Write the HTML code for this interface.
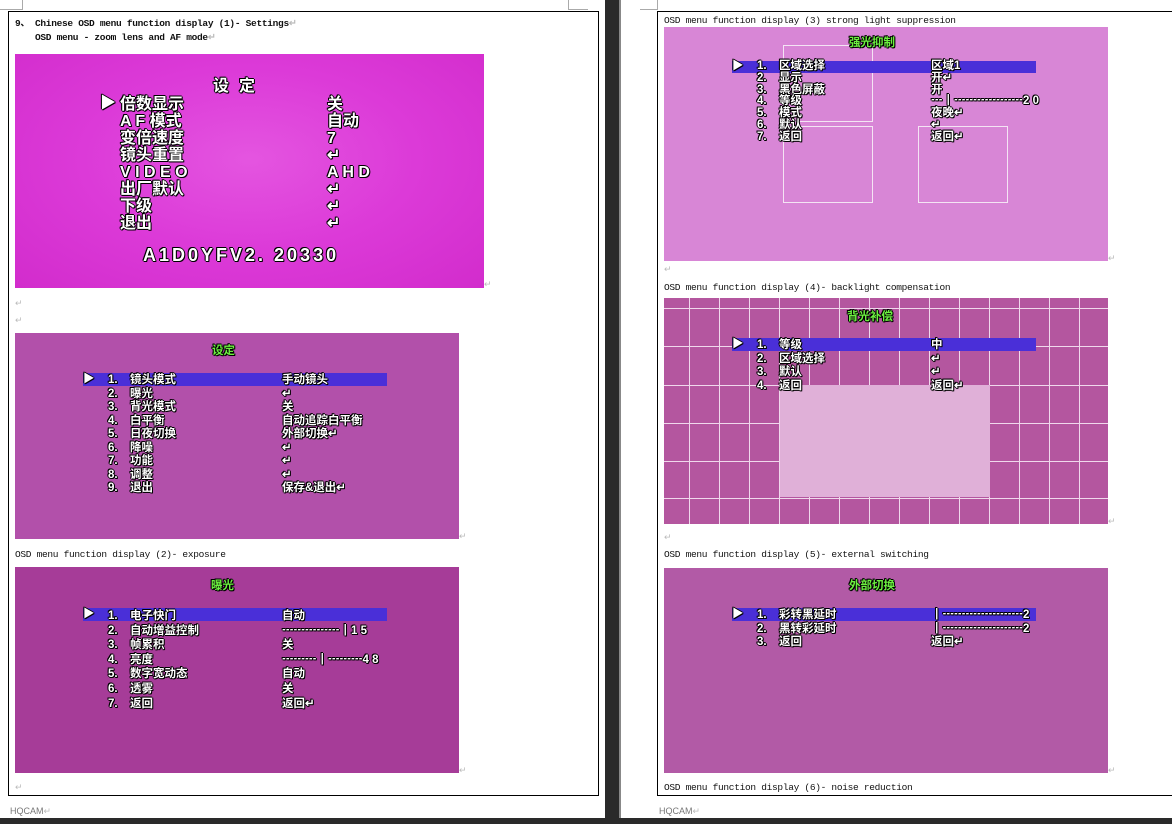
<!DOCTYPE html>
<html><head><meta charset="utf-8"><style>
*{margin:0;padding:0;box-sizing:border-box}
body{width:1172px;height:824px;background:#fff;position:relative;overflow:hidden;font-family:"Liberation Mono","Noto Sans CJK SC",monospace}
.a{position:absolute}
.cap{position:absolute;font-size:9.5px;color:#111;white-space:nowrap;font-family:"Liberation Mono","Noto Sans CJK SC",monospace;letter-spacing:-0.3px}
.img{position:absolute;overflow:hidden}
.o{position:absolute;white-space:nowrap;color:#fff;font-family:"Liberation Sans","Noto Sans CJK SC",sans-serif;font-weight:bold;
text-shadow:1px 0 0 #000,-1px 0 0 #000,0 1px 0 #000,0 -1px 0 #000,1px 1px 0 #000,-1px -1px 0 #000;line-height:1}
.s{font-size:11.5px}
.g{color:#6cf040}
.bar{position:absolute;background:#4a2fd8}
.ret{font-size:9px;color:#bbb;position:absolute}
.box{position:absolute;border:1.5px solid #f4e4f4}
</style></head><body>
<!-- left page -->
<div class="a" style="left:8px;top:11px;width:591px;height:785px;border:1px solid #000"></div>
<div class="a" style="left:22px;top:0;width:1px;height:10px;background:#aaa"></div>
<div class="a" style="left:0;top:9px;width:22px;height:1px;background:#aaa"></div>
<div class="a" style="left:568px;top:0;width:1px;height:10px;background:#aaa"></div>
<div class="a" style="left:568px;top:9px;width:20px;height:1px;background:#aaa"></div>
<div class="a" style="left:605px;top:0;width:15px;height:824px;background:#2a2a2a"></div>
<div class="a" style="left:619px;top:0;width:2px;height:824px;background:#888"></div>
<div class="a" style="left:0;top:818px;width:1172px;height:6px;background:#2a2a2a"></div>
<div class="a" style="left:657px;top:0;width:1px;height:10px;background:#aaa"></div>
<div class="a" style="left:640px;top:9px;width:17px;height:1px;background:#aaa"></div>
<!-- right page -->
<div class="a" style="left:657px;top:11px;width:520px;height:785px;border:1px solid #000"></div>

<div class="cap" style="left:15px;top:15px;font-weight:bold">9、 Chinese OSD menu function display (1)- Settings<span style="color:#bbb">↵</span></div>
<div class="cap" style="left:35px;top:32px;font-weight:bold">OSD menu - zoom lens and AF mode<span style="color:#bbb">↵</span></div>

<!-- image 1 -->
<div class="img" style="left:15px;top:54px;width:469px;height:234px;background:radial-gradient(ellipse at 50% 45%,#e455e0 0%,#dc3ad8 50%,#d22ccc 100%)">
<div class="o" style="left:198px;top:25px;font-size:16px;letter-spacing:10px">设定</div>
<div class="o" style="left:85px;top:42px;font-size:16px">▶</div>
<div class="o" style="left:105px;top:42px;font-size:16px;line-height:17px">倍数显示<br>A F 模式<br>变倍速度<br>镜头重置<br>V I D E O<br>出厂默认<br>下级<br>退出</div>
<div class="o" style="left:312px;top:42px;font-size:16px;line-height:17px">关<br>自动<br>7<br>↵<br>A H D<br>↵<br>↵<br>↵</div>
<div class="o" style="left:128px;top:192px;font-size:18px;letter-spacing:3px">A1D0YFV2. 20330</div>
</div>
<div class="ret" style="left:484px;top:280px">↵</div>
<div class="ret" style="left:15px;top:299px">↵</div>
<div class="ret" style="left:15px;top:316px">↵</div>

<!-- image 2 -->
<div class="img" style="left:15px;top:333px;width:444px;height:206px;background:#b250aa">
<div class="o s g" style="left:197px;top:13px">设定</div>
<div class="bar" style="left:68px;top:40px;width:304px;height:13px"></div>
<div class="o s" style="left:68px;top:41px">▶</div>
<div class="o s" style="left:93px;top:41px;line-height:13.5px">1.<br>2.<br>3.<br>4.<br>5.<br>6.<br>7.<br>8.<br>9.</div>
<div class="o s" style="left:115px;top:41px;line-height:13.5px">镜头模式<br>曝光<br>背光模式<br>白平衡<br>日夜切换<br>降噪<br>功能<br>调整<br>退出</div>
<div class="o s" style="left:267px;top:41px;line-height:13.5px">手动镜头<br>↵<br>关<br>自动追踪白平衡<br>外部切换↵<br>↵<br>↵<br>↵<br>保存&amp;退出↵</div>
</div>
<div class="ret" style="left:459px;top:532px">↵</div>
<div class="cap" style="left:15px;top:549px">OSD menu function display (2)- exposure</div>

<!-- image 3 -->
<div class="img" style="left:15px;top:567px;width:444px;height:206px;background:#a63c98">
<div class="o s g" style="left:196px;top:14px">曝光</div>
<div class="bar" style="left:68px;top:41px;width:304px;height:13px"></div>
<div class="o s" style="left:68px;top:42px">▶</div>
<div class="o s" style="left:93px;top:42px;line-height:14.6px">1.<br>2.<br>3.<br>4.<br>5.<br>6.<br>7.</div>
<div class="o s" style="left:115px;top:42px;line-height:14.6px">电子快门<br>自动增益控制<br>帧累积<br>亮度<br>数字宽动态<br>透雾<br>返回</div>
<div class="o s" style="left:267px;top:42px;line-height:14.6px">自动<br>┅┅┅┅┅┃1 5<br>关<br>┅┅┅┃┅┅┅4 8<br>自动<br>关<br>返回↵</div>
</div>
<div class="ret" style="left:459px;top:766px">↵</div>
<div class="ret" style="left:15px;top:783px">↵</div>
<div class="a" style="left:10px;top:806px;font-size:9px;color:#777;font-family:'Liberation Sans',sans-serif">HQCAM<span style="color:#bbb">↵</span></div>

<!-- R1 -->
<div class="cap" style="left:664px;top:15px">OSD menu function display (3) strong light suppression</div>
<div class="img" style="left:664px;top:27px;width:444px;height:234px;background:#d886d6">
<div class="box" style="left:119px;top:18px;width:90px;height:77px"></div>
<div class="box" style="left:119px;top:99px;width:90px;height:77px"></div>
<div class="box" style="left:254px;top:99px;width:90px;height:77px"></div>
<div class="o s g" style="left:185px;top:11px">强光抑制</div>
<div class="bar" style="left:68px;top:34px;width:304px;height:12px"></div>
<div class="o s" style="left:68px;top:34px">▶</div>
<div class="o s" style="left:93px;top:34px;line-height:11.8px">1.<br>2.<br>3.<br>4.<br>5.<br>6.<br>7.</div>
<div class="o s" style="left:115px;top:34px;line-height:11.8px">区域选择<br>显示<br>黑色屏蔽<br>等级<br>模式<br>默认<br>返回</div>
<div class="o s" style="left:267px;top:34px;line-height:11.8px">区域1<br>开↵<br>开<br>┅┃┅┅┅┅┅┅2 0<br>夜晚↵<br>↵<br>返回↵</div>
</div>
<div class="ret" style="left:1108px;top:254px">↵</div>
<div class="ret" style="left:664px;top:265px">↵</div>

<!-- R2 -->
<div class="cap" style="left:664px;top:282px">OSD menu function display (4)- backlight compensation</div>
<div class="img" style="left:664px;top:298px;width:444px;height:226px;background:#b4569f;
background-image:repeating-linear-gradient(90deg,transparent 0 25px,#f0d8ec 25px 26px,transparent 26px 30px),repeating-linear-gradient(0deg,transparent 0 0px);">
<div class="a" style="left:0;top:10px;width:444px;height:1px;background:#f0d8ec"></div>
<div class="a" style="left:0;top:48px;width:444px;height:1px;background:#f0d8ec"></div>
<div class="a" style="left:0;top:87px;width:444px;height:1px;background:#f0d8ec"></div>
<div class="a" style="left:0;top:125px;width:444px;height:1px;background:#f0d8ec"></div>
<div class="a" style="left:0;top:163px;width:444px;height:1px;background:#f0d8ec"></div>
<div class="a" style="left:0;top:200px;width:444px;height:1px;background:#f0d8ec"></div>
<div class="a" style="left:116px;top:87px;width:210px;height:112px;background:#e0b0d8"></div>
<div class="o s g" style="left:183px;top:14px">背光补偿</div>
<div class="bar" style="left:68px;top:40px;width:304px;height:13px"></div>
<div class="o s" style="left:68px;top:41px">▶</div>
<div class="o s" style="left:93px;top:41px;line-height:13.5px">1.<br>2.<br>3.<br>4.</div>
<div class="o s" style="left:115px;top:41px;line-height:13.5px">等级<br>区域选择<br>默认<br>返回</div>
<div class="o s" style="left:267px;top:41px;line-height:13.5px">中<br>↵<br>↵<br>返回↵</div>
</div>
<div class="ret" style="left:1108px;top:517px">↵</div>
<div class="ret" style="left:664px;top:533px">↵</div>

<!-- R3 -->
<div class="cap" style="left:664px;top:549px">OSD menu function display (5)- external switching</div>
<div class="img" style="left:664px;top:568px;width:444px;height:205px;background:#b25aa6">
<div class="o s g" style="left:185px;top:13px">外部切换</div>
<div class="bar" style="left:68px;top:40px;width:304px;height:13px"></div>
<div class="o s" style="left:68px;top:41px">▶</div>
<div class="o s" style="left:93px;top:41px;line-height:13.5px">1.<br>2.<br>3.</div>
<div class="o s" style="left:115px;top:41px;line-height:13.5px">彩转黑延时<br>黑转彩延时<br>返回</div>
<div class="o s" style="left:267px;top:41px;line-height:13.5px">┃┅┅┅┅┅┅┅2<br>┃┅┅┅┅┅┅┅2<br>返回↵</div>
</div>
<div class="ret" style="left:1108px;top:766px">↵</div>
<div class="cap" style="left:664px;top:782px">OSD menu function display (6)- noise reduction</div>
<div class="a" style="left:659px;top:806px;font-size:9px;color:#777;font-family:'Liberation Sans',sans-serif">HQCAM<span style="color:#bbb">↵</span></div>
</body></html>
